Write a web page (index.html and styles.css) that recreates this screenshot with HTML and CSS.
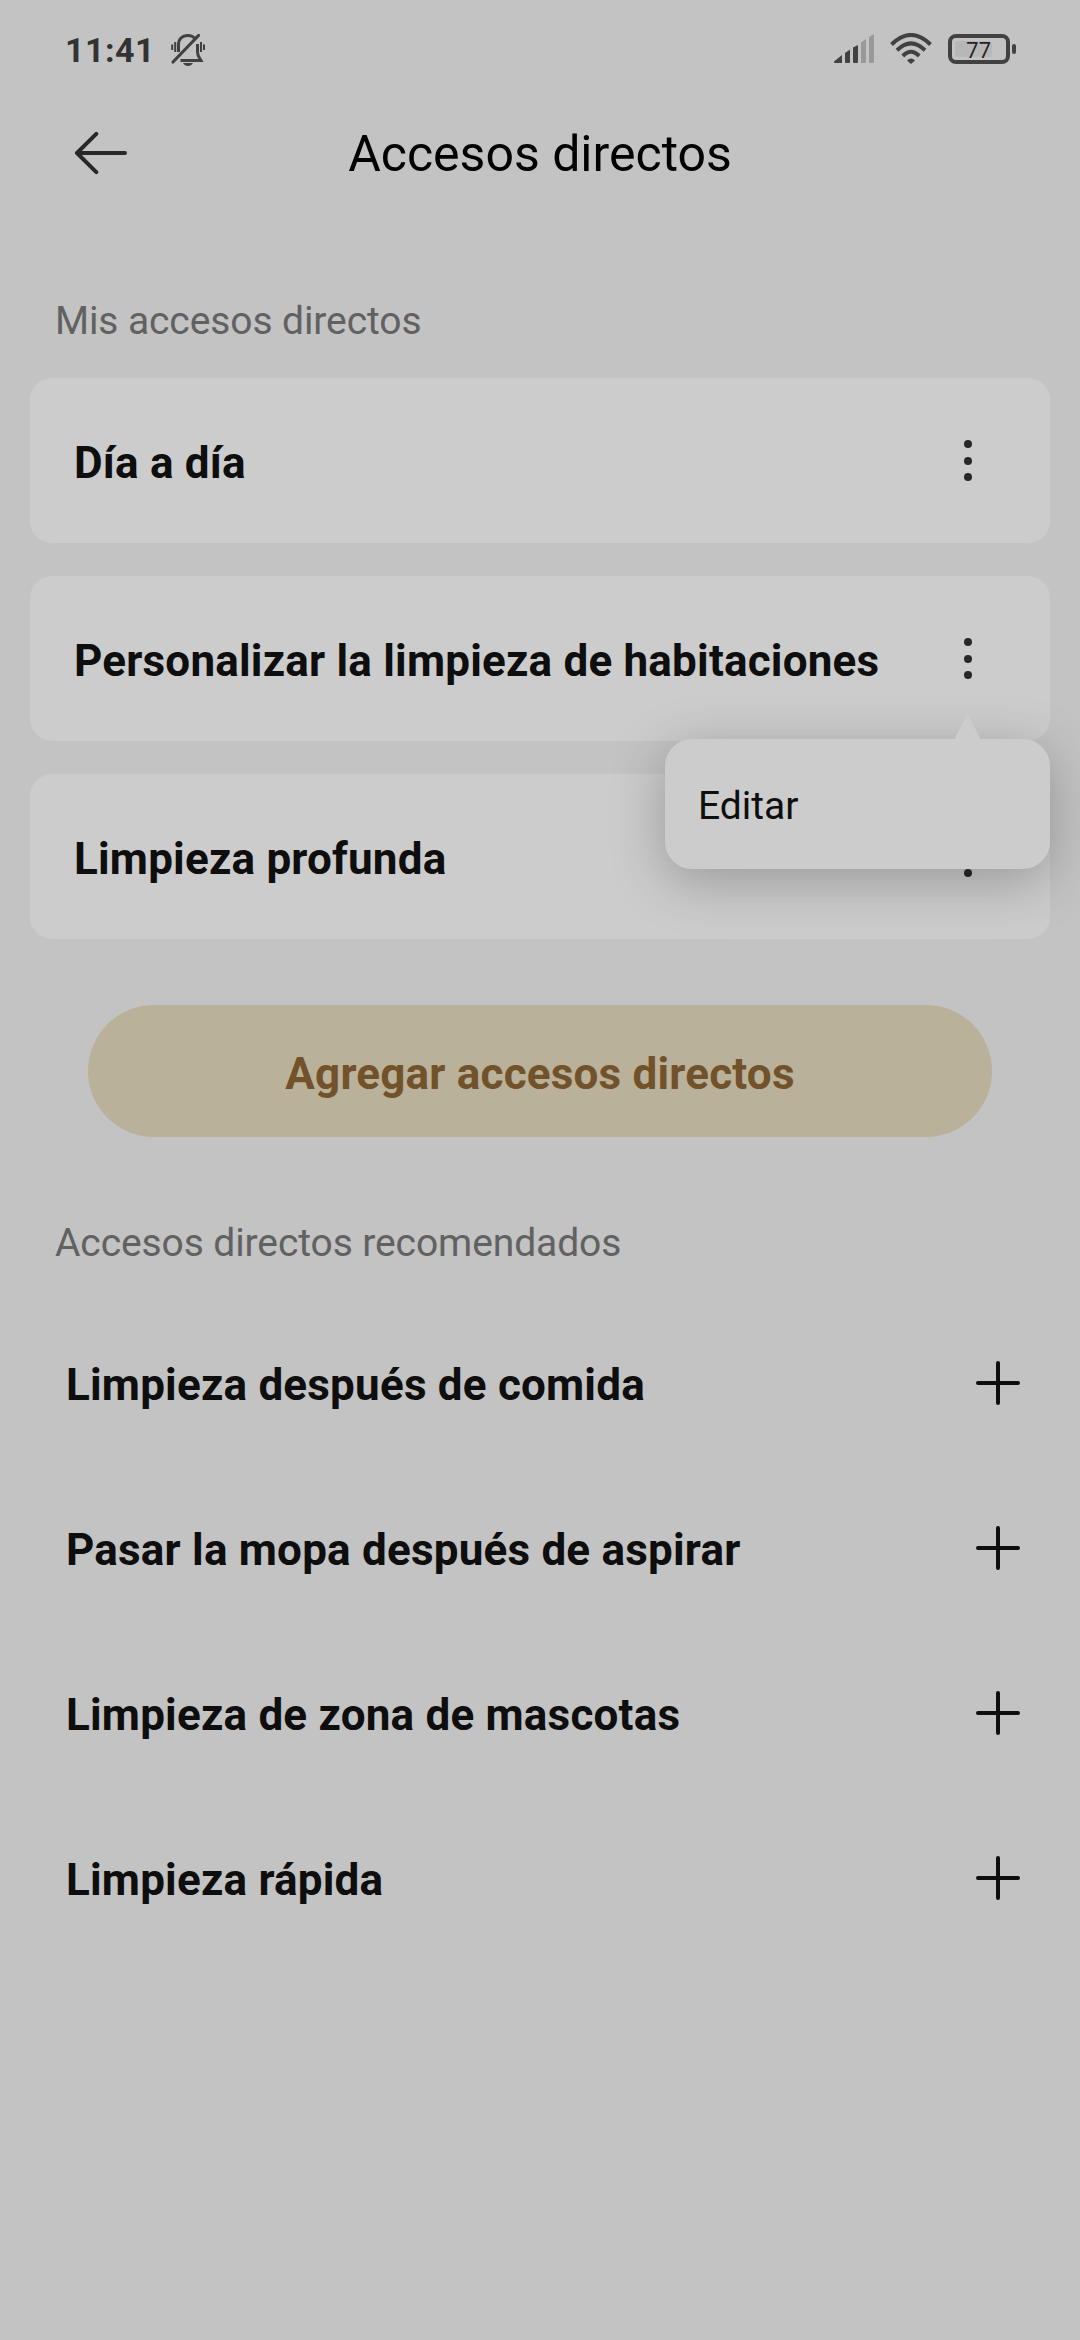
FILE: index.html
```html
<!DOCTYPE html>
<html lang="es">
<head>
<meta charset="utf-8">
<title>Accesos directos</title>
<link rel="stylesheet" href="styles.css">
</head>
<body>
<div class="screen">
  <div class="status">
    <span class="clock">11:41</span>
    <svg class="bell" width="36" height="34" viewBox="0 0 36 34" fill="none" stroke="#414141" stroke-width="3">
      <path d="M8.500 19V12C8.500 6 12 2.500 18 2.500c3.500 0 6 1.500 8 4M27.500 11v8c0 4 1.500 5 3.500 8.500H10.500"/>
      <path d="M3 29 28.500 2.500" stroke-width="3.200" stroke-linecap="round"/>
      <path d="M5.200 9v10M31 9v10" stroke-width="2"/>
      <path d="M2.200 11.500v5.500M34 11.500v5.500" stroke-width="2"/>
      <path d="M13 30h10c-1 2-3 3-5 3s-4-1-5-3z" fill="#414141" stroke="none"/>
    </svg>
    <svg class="signal" width="41" height="30" viewBox="0 0 41 30">
      <path fill="#414141" d="M0 27.500 8 21V29H1Q0 29 0 27.500zM11 19l5-3.500V28q0 1-1 1h-3q-1 0-1-1zM19 13.500 24 11V28q0 1-1 1h-3q-1 0-1-1z"/>
      <path fill="#999" d="M27 8.500 32 5V28q0 1-1 1h-3q-1 0-1-1zM35 3l5-3V28q0 1-1 1h-3q-1 0-1-1z"/>
    </svg>
    <svg class="wifi" width="42" height="32" viewBox="0 0 42 32" fill="none" stroke="#414141" stroke-width="4">
      <path d="M1.500 11.500Q21-7.500 40.500 11.500M7 17.200Q21 3.500 35 17.200M12.800 23Q21 14.500 29.200 23"/>
      <path d="M17 27.500q4-4 8 0L21 31z" fill="#414141" stroke="none"/>
    </svg>
    <div class="battery"><span class="level">77</span></div>
  </div>

  <header class="bar">
    <svg class="back" width="54" height="44" viewBox="0 0 54 44" fill="none" stroke="#282828" stroke-width="4" stroke-linecap="round" stroke-linejoin="round">
      <path d="M22.300 2.800 3 22 22.300 41.200M3 22H51"/>
    </svg>
    <h1 class="title">Accesos directos</h1>
  </header>

  <h2 class="label">Mis accesos directos</h2>
  <div class="cards">
    <div class="card"><span class="name">Día a día</span><span class="dots"><i></i><i></i><i></i></span></div>
    <div class="card"><span class="name">Personalizar la limpieza de habitaciones</span><span class="dots"><i></i><i></i><i></i></span>
      <div class="menu">Editar</div>
    </div>
    <div class="card"><span class="name">Limpieza profunda</span><span class="dots"><i></i><i></i><i></i></span></div>
  </div>

  <button class="add">Agregar accesos directos</button>

  <h2 class="label second">Accesos directos recomendados</h2>
  <div class="rows">
    <div class="row"><span class="name">Limpieza después de comida</span><svg class="plus" viewBox="0 0 48 48"><path d="M24 4V44M4 24H44"/></svg></div>
    <div class="row"><span class="name">Pasar la mopa después de aspirar</span><svg class="plus" viewBox="0 0 48 48"><path d="M24 4V44M4 24H44"/></svg></div>
    <div class="row"><span class="name">Limpieza de zona de mascotas</span><svg class="plus" viewBox="0 0 48 48"><path d="M24 4V44M4 24H44"/></svg></div>
    <div class="row"><span class="name">Limpieza rápida</span><svg class="plus" viewBox="0 0 48 48"><path d="M24 4V44M4 24H44"/></svg></div>
  </div>
</div>
</body>
</html>
```
FILE: styles.css
```css
* { box-sizing: border-box; margin: 0; padding: 0; }
body { background: #c3c3c3; font-family: Roboto, sans-serif; color: #0e0e0e; }
.screen { width: 1080px; height: 2340px; overflow: hidden; }

.status { height: 100px; display: flex; align-items: flex-start; padding: 0 64px 0 65px; }
.clock { width: 90px; font-size: 34px; font-weight: 700; line-height: 40px; color: #333; margin-top: 30px; letter-spacing: .5px; }
.bell { margin: 33px 0 0 15px; }
.signal { margin: 34px 0 0 auto; }
.wifi { margin: 33px 0 0 15px; }
.battery {
  position: relative; width: 62px; height: 30px; margin: 34px 6px 0 16px; padding: 3px;
  border: 4px solid #414141; border-radius: 8px;
}
.battery::after {
  content: ""; position: absolute; left: 60px; top: 6px; width: 4px; height: 10px;
  border-radius: 2px; background: #414141;
}
.level {
  display: block; width: 37px; height: 16px; border-radius: 3px; background: #b7b7b7; color: #222;
  font: 22px/17px "Open Sans", sans-serif; padding-left: 11px;
}

.bar { height: 106px; display: flex; align-items: center; position: relative; padding-left: 74px; }
.title { flex: 1; margin-left: -128px; text-align: center; font-size: 50px; font-weight: 400; line-height: 60px; color: #000; padding-top: 2px; }

.label { font-size: 39px; font-weight: 400; line-height: 48px; letter-spacing: -.1px; color: #616161; margin: 91px 0 0 55px; }
.cards { display: flex; flex-direction: column; gap: 33px; margin: 33px 30px 0; }
.card {
  position: relative; height: 165px; display: flex; align-items: center; justify-content: space-between;
  padding: 0 78px 0 44px; border-radius: 22px; background: #ccc;
}
.name { font-size: 44px; font-weight: 700; line-height: 56px; letter-spacing: .2px; padding-top: 5px; white-space: nowrap; }
.dots { display: flex; flex-direction: column; gap: 8.500px; }
.dots i { width: 8px; height: 8px; border-radius: 50%; background: #282828; }

.menu {
  position: absolute; z-index: 2; left: 635px; top: 163px; width: 385px; height: 130px;
  padding: 4px 0 0 33px; border-radius: 27px; background: #ccc;
  font-size: 39px; line-height: 126px; box-shadow: 0 12px 54px rgba(0, 0, 0, .25);
}
.menu::before {
  content: ""; position: absolute; left: 289px; top: -25px; width: 27px; height: 26px;
  background: #ccc; clip-path: polygon(50% 0, 100% 100%, 0 100%);
}

.add {
  display: block; width: 904px; height: 132px; margin: 66px auto 0; padding-top: 5px;
  border: 0; border-radius: 66px; background: #bab19a; color: #72522a;
  font: 700 44px/56px Roboto, sans-serif; letter-spacing: .2px;
}
.second { margin-top: 82px; }
.rows { margin: 33px 58px 0 66px; }
.row { height: 165px; display: flex; align-items: center; justify-content: space-between; }
.plus { width: 48px; height: 48px; fill: none; stroke: #0e0e0e; stroke-width: 4; stroke-linecap: round; }
```
